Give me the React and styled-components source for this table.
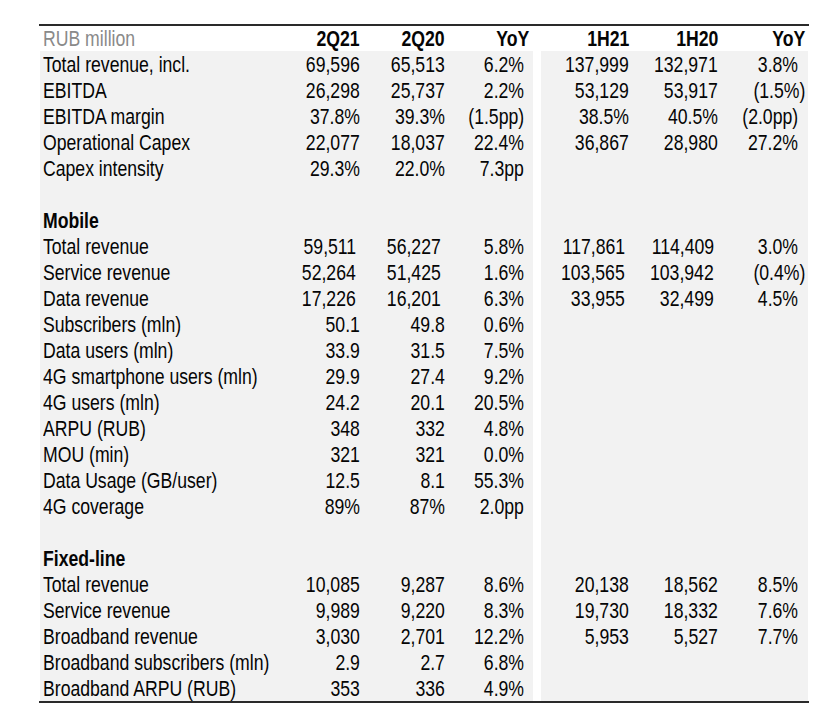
import React from "react";
import styled, { createGlobalStyle } from "styled-components";

const GlobalStyle = createGlobalStyle`
  html, body {
    margin: 0;
    padding: 0;
    background: #ffffff;
  }
  body {
    font-family: "Liberation Sans", Arial, sans-serif;
    color: #050505;
  }
`;

const rows = [
  { label: "Total revenue, incl.", q: ["69,596", "65,513", "6.2%"], h: ["137,999", "132,971", "3.8%"] },
  { label: "EBITDA", q: ["26,298", "25,737", "2.2%"], h: ["53,129", "53,917", "(1.5%)"] },
  { label: "EBITDA margin", q: ["37.8%", "39.3%", "(1.5pp)"], h: ["38.5%", "40.5%", "(2.0pp)"] },
  { label: "Operational Capex", q: ["22,077", "18,037", "22.4%"], h: ["36,867", "28,980", "27.2%"] },
  { label: "Capex intensity", q: ["29.3%", "22.0%", "7.3pp"] },
  { blank: true },
  { label: "Mobile", section: true },
  { label: "Total revenue", q: ["59,511", "56,227", "5.8%"], h: ["117,861", "114,409", "3.0%"], nudge: true },
  { label: "Service revenue", q: ["52,264", "51,425", "1.6%"], h: ["103,565", "103,942", "(0.4%)"], nudge: true },
  { label: "Data revenue", q: ["17,226", "16,201", "6.3%"], h: ["33,955", "32,499", "4.5%"], nudge: true },
  { label: "Subscribers (mln)", q: ["50.1", "49.8", "0.6%"] },
  { label: "Data users (mln)", q: ["33.9", "31.5", "7.5%"] },
  { label: "4G smartphone users (mln)", q: ["29.9", "27.4", "9.2%"] },
  { label: "4G users (mln)", q: ["24.2", "20.1", "20.5%"] },
  { label: "ARPU (RUB)", q: ["348", "332", "4.8%"] },
  { label: "MOU (min)", q: ["321", "321", "0.0%"] },
  { label: "Data Usage (GB/user)", q: ["12.5", "8.1", "55.3%"] },
  { label: "4G coverage", q: ["89%", "87%", "2.0pp"] },
  { blank: true },
  { label: "Fixed-line", section: true },
  { label: "Total revenue", q: ["10,085", "9,287", "8.6%"], h: ["20,138", "18,562", "8.5%"] },
  { label: "Service revenue", q: ["9,989", "9,220", "8.3%"], h: ["19,730", "18,332", "7.6%"] },
  { label: "Broadband revenue", q: ["3,030", "2,701", "12.2%"], h: ["5,953", "5,527", "7.7%"] },
  { label: "Broadband subscribers (mln)", q: ["2.9", "2.7", "6.8%"] },
  { label: "Broadband ARPU (RUB)", q: ["353", "336", "4.9%"] },
];

const Page = styled.div`
  padding: 24px 0 0 39px;
`;

const Sheet = styled.div`
  width: 770px;
  border-top: 2px solid #2a2a2a;
  border-bottom: 2px solid #2a2a2a;
  font-size: 21.5px;
`;

const Row = styled.div`
  display: flex;
  gap: 8px;
  height: ${(p) => (p.$head ? 25 : 26)}px;
  line-height: ${(p) => (p.$head ? 26 : 29)}px;
`;

const LeftBlock = styled.div`
  display: flex;
  width: 486px;
  margin-left: 1px;
  padding: 0 4px 0 3px;
  background: ${(p) => (p.$head ? "#ffffff" : "#f2f2f2")};
`;

const RightBlock = styled.div`
  display: flex;
  width: 264px;
  padding-right: 3px;
  background: ${(p) => (p.$head ? "#ffffff" : "#f2f2f2")};
`;

const Label = styled.div`
  width: 237px;
  white-space: nowrap;
  font-weight: ${(p) => (p.$bold ? 700 : 400)};
  color: ${(p) => (p.$muted ? "#8a8a8a" : "inherit")};
`;

const Cell = styled.div`
  width: ${(p) => p.$w}px;
  box-sizing: border-box;
  padding-right: ${(p) => p.$pad || 0}px;
  text-align: right;
  white-space: nowrap;
  font-weight: ${(p) => (p.$bold ? 700 : 400)};
`;

// the sheet uses a narrow grotesque; squeeze the regular face to its width
const Narrow = styled.span`
  display: inline-block;
  transform: scaleX(0.82);
  transform-origin: ${(p) => (p.$left ? "left" : "right")} center;
`;

const leftCols = [80, 85, 84];
const rightCols = [88, 89, 87];

const padFor = (i, v, side, nudge) => {
  if (side === "left") {
    if (i === 2) return 5;
    return nudge ? 4 : 0;
  }
  if (i === 2) return v && v.endsWith("%)") ? 0 : 7;
  return nudge ? 4 : 0;
};

const DataRow = ({ row }) => {
  const q = row.q || [];
  const h = row.h || [];
  return (
    <Row>
      <LeftBlock>
        <Label $bold={row.section}>
          <Narrow $left>{row.label}</Narrow>
        </Label>
        {leftCols.map((w, i) => (
          <Cell key={i} $w={w} $pad={padFor(i, q[i], "left", row.nudge)}>
            <Narrow>{q[i]}</Narrow>
          </Cell>
        ))}
      </LeftBlock>
      <RightBlock>
        {rightCols.map((w, i) => (
          <Cell key={i} $w={w} $pad={padFor(i, h[i], "right", row.nudge)}>
            <Narrow>{h[i]}</Narrow>
          </Cell>
        ))}
      </RightBlock>
    </Row>
  );
};

export default function App() {
  return (
    <>
      <GlobalStyle />
      <Page>
        <Sheet>
          <Row $head>
            <LeftBlock $head>
              <Label $muted><Narrow $left>RUB million</Narrow></Label>
              <Cell $w={80} $bold><Narrow>2Q21</Narrow></Cell>
              <Cell $w={85} $bold><Narrow>2Q20</Narrow></Cell>
              <Cell $w={84} $bold><Narrow>YoY</Narrow></Cell>
            </LeftBlock>
            <RightBlock $head>
              <Cell $w={88} $bold><Narrow>1H21</Narrow></Cell>
              <Cell $w={89} $bold><Narrow>1H20</Narrow></Cell>
              <Cell $w={87} $bold><Narrow>YoY</Narrow></Cell>
            </RightBlock>
          </Row>
          {rows.map((row, i) => (
            <DataRow key={i} row={row} />
          ))}
        </Sheet>
      </Page>
    </>
  );
}
